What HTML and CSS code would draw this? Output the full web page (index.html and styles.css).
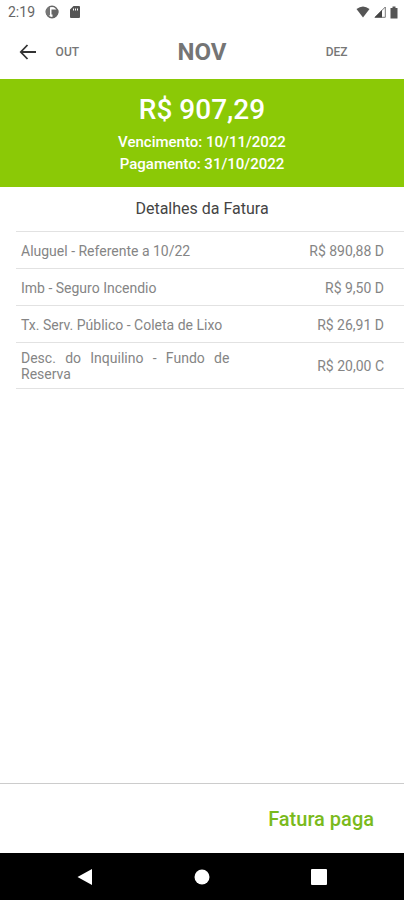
FILE: index.html
```
<!DOCTYPE html>
<html lang="pt-BR">
<head>
<meta charset="utf-8">
<meta name="viewport" content="width=device-width, initial-scale=1">
<title>Detalhes da Fatura</title>
<link rel="stylesheet" href="styles.css">
</head>
<body>
<div class="status">
  <div class="status-group status-left">
    <span class="clock">2:19</span>
    <svg width="14" height="14" viewBox="0 0 14 14" aria-hidden="true"><circle cx="7" cy="7" r="5.700" fill="#fff" stroke="#666" stroke-width="1.500"/><path d="M1.500 4L4 1.500H5V10L3.500 11.500A6 6 0 0 1 1.500 4z" fill="#777"/><path d="M6.500 4.500H13a6 6 0 0 1-5.500 8.300V9.500h-1z" fill="#666"/></svg>
    <svg width="12" height="14" viewBox="0 0 12 14" aria-hidden="true"><path fill="#555" fill-rule="evenodd" d="M4.500 1H10a1 1 0 0 1 1 1v10a1 1 0 0 1-1 1H2a1 1 0 0 1-1-1V4.500zM4 3.500v2h1v-2zm2 0v2h1v-2zm2 0v2h1v-2z"/></svg>
  </div>
  <div class="status-group status-right">
    <svg width="14" height="12" viewBox="0 0 14 12" aria-hidden="true"><path d="M0.500 3Q7-2 13.500 3L7 11.500z" fill="#555"/></svg>
    <svg width="12" height="12" viewBox="0 0 12 12" aria-hidden="true"><path d="M1 11.300L11.300 1v10.300z" fill="#fff" stroke="#777"/><path d="M0.500 11.500L8 4v7.500z" fill="#444"/></svg>
    <svg width="8" height="13" viewBox="0 0 8 13" aria-hidden="true"><path d="M2.500 0.500h3v1.500H7.500v10.500h-7V2h2z" fill="#555"/></svg>
  </div>
</div>
<header class="months">
  <button class="back" type="button" aria-label="Voltar">
    <svg width="18" height="16" viewBox="0 0 18 16" aria-hidden="true"><path d="M17 8H2M8.500 1L1.800 8l6.700 7" fill="none" stroke="#333" stroke-width="1.800"/></svg>
  </button>
  <button class="month" type="button">OUT</button>
  <h1 class="month-current">NOV</h1>
  <button class="month" type="button">DEZ</button>
</header>
<section class="summary">
  <p class="total">R$ 907,29</p>
  <p class="date">Vencimento: 10/11/2022</p>
  <p class="date">Pagamento: 31/10/2022</p>
</section>
<main class="details">
  <h2 class="details-title">Detalhes da Fatura</h2>
  <table class="items">
    <tbody>
      <tr><td class="name">Aluguel - Referente a 10/22</td><td class="value">R$ 890,88 D</td></tr>
      <tr><td class="name">Imb - Seguro Incendio</td><td class="value">R$ 9,50 D</td></tr>
      <tr><td class="name">Tx. Serv. Público - Coleta de Lixo</td><td class="value">R$ 26,91 D</td></tr>
      <tr><td class="name">Desc. do Inquilino - Fundo de Reserva</td><td class="value">R$ 20,00 C</td></tr>
    </tbody>
  </table>
</main>
<footer class="paid">Fatura paga</footer>
<nav class="system">
  <button type="button" aria-label="Voltar"><svg width="16" height="16" viewBox="0 0 16 16"><path d="M0.500 8L15 0v16z" fill="#fff"/></svg></button>
  <button type="button" aria-label="Início"><svg width="16" height="16" viewBox="0 0 16 16"><circle cx="8" cy="8" r="7.500" fill="#fff"/></svg></button>
  <button type="button" aria-label="Recentes"><svg width="16" height="16" viewBox="0 0 16 16"><rect width="16" height="16" rx="1" fill="#fff"/></svg></button>
</nav>
</body>
</html>
```
FILE: styles.css
```
* { box-sizing: border-box; }
body {
  margin: 0;
  min-height: 100vh;
  display: flex;
  flex-direction: column;
  background: #fff;
  color: #858585;
  font-family: Roboto, "Liberation Sans", sans-serif;
}
h1, h2, p { margin: 0; }
button {
  border: 0;
  padding: 0;
  background: none;
  font-family: inherit;
  color: inherit;
}
svg { display: block; }
.status {
  display: flex;
  justify-content: space-between;
  align-items: center;
  height: 24px;
  padding: 0 6px 0 8px;
}
.status-group { display: flex; align-items: center; }
.status-left { gap: 10px; }
.status-right { gap: 4px; }
.clock { font-size: 14px; color: #666; }
.months {
  position: relative;
  display: grid;
  grid-template-columns: repeat(3, 1fr);
  align-items: center;
  justify-items: center;
  height: 55px;
}
.back { position: absolute; left: 19px; }
.month { font-size: 12px; font-weight: 500; color: #777; }
.month-current { font-size: 24px; font-weight: 700; color: #757575; }
.summary {
  padding: 14px 0 12px;
  background: #8bc906;
  color: #fff;
  text-align: center;
}
.total { font-size: 28px; line-height: 34px; font-weight: 500; padding-bottom: 4px; }
.date { font-size: 15px; line-height: 22px; font-weight: 500; }
.details { flex: 1; }
.details-title {
  font-size: 16px;
  line-height: 44px;
  font-weight: 400;
  color: #444;
  text-align: center;
}
.items {
  width: calc(100% - 16px);
  margin-left: 16px;
  border-collapse: collapse;
  font-size: 14px;
  line-height: 16px;
}
.items tr { height: 37px; border-top: 1px solid #e2e2e2; border-bottom: 1px solid #e2e2e2; }
.items td { padding: 7px 0 6px; }
.items .name { width: 55%; padding-left: 5px; text-align: justify; }
.items .value { padding-right: 20px; text-align: right; }
.paid {
  padding-right: 30px;
  padding-top: 2px;
  border-top: 1px solid #ccc;
  font-size: 20px;
  line-height: 67px;
  font-weight: 500;
  color: #7aba1c;
  text-align: right;
}
.system {
  display: flex;
  justify-content: center;
  align-items: center;
  gap: 101px;
  height: 47px;
  background: #000;
}
```
